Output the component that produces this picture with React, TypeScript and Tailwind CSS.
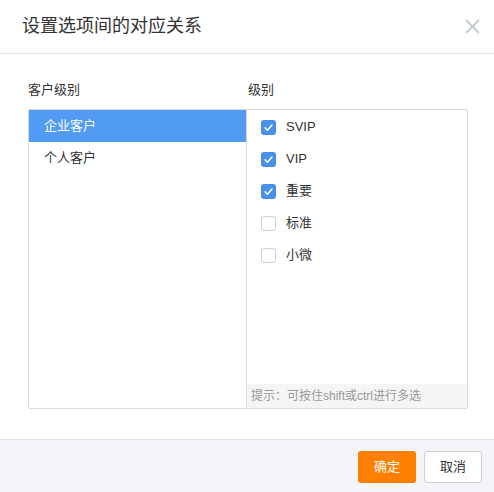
import { useState } from 'react';

const customerLevels = ['企业客户', '个人客户'];
const levels = ['SVIP', 'VIP', '重要', '标准', '小微'];

const CheckIcon = () => (
  <svg viewBox="0 0 16 16" className="w-[11px] h-[11px]" fill="none">
    <path d="M3 8.5 L6.5 12 L13 4.5" stroke="#fff" strokeWidth="2.2" strokeLinecap="round" strokeLinejoin="round" />
  </svg>
);

const App = () => {
  const [activeCustomer, setActiveCustomer] = useState(0);
  const [checked, setChecked] = useState<string[]>(['SVIP', 'VIP', '重要']);

  const toggle = (name: string) => {
    setChecked((prev) => (prev.includes(name) ? prev.filter((n) => n !== name) : [...prev, name]));
  };

  return (
    <div
      className="w-[494px] h-[492px] bg-white flex flex-col text-[#333]"
      style={{ fontFamily: '"Liberation Sans", "Noto Sans CJK SC", sans-serif' }}
    >
      {/* header */}
      <div className="h-[54px] shrink-0 flex items-center justify-between border-b border-[#e4e4e4] pl-[22px] pr-[14px]">
        <h2 className="text-[18px] text-[#333] leading-none pb-[1px]">设置选项间的对应关系</h2>
        <button className="w-[15px] h-[15px] flex items-center justify-center">
          <svg viewBox="0 0 15 15" className="w-[15px] h-[15px]">
            <path d="M1 1 L14 14 M14 1 L1 14" stroke="#c6ccd6" strokeWidth="1.9" />
          </svg>
        </button>
      </div>

      {/* body */}
      <div className="flex-1 pt-[26px] pl-[28px]">
        <div className="flex w-[440px] h-[20px] items-center text-[13px]">
          <div className="w-[220px]">客户级别</div>
          <div>级别</div>
        </div>
        <div className="mt-[9px] w-[440px] h-[300px] border border-[#d9d9d9] rounded-[2px] flex">
          <div className="w-[218px] border-r border-[#d9d9d9]">
            {customerLevels.map((name, i) => (
              <div
                key={name}
                onClick={() => setActiveCustomer(i)}
                className={`h-[32px] flex items-center pl-[15px] text-[13px] cursor-pointer ${
                  activeCustomer === i ? 'bg-[#519cf2] text-white' : 'text-[#333]'
                }`}
              >
                {name}
              </div>
            ))}
          </div>
          <div className="flex-1 flex flex-col">
            <div className="flex-1 pt-[1px]">
              {levels.map((name) => {
                const on = checked.includes(name);
                return (
                  <label key={name} className="h-[32px] flex items-center pl-[14px] cursor-pointer" onClick={() => toggle(name)}>
                    <span
                      className={`w-[15px] h-[15px] rounded-[3px] flex items-center justify-center ${
                        on ? 'bg-[#4a8fe8]' : 'bg-white border border-[#d0d0d0]'
                      }`}
                    >
                      {on && <CheckIcon />}
                    </span>
                    <span className="ml-[10px] text-[13px]">{name}</span>
                  </label>
                );
              })}
            </div>
            <div className="h-[24px] bg-[#f5f5f5] flex items-center pl-[4px] text-[12px] text-[#999]">
              提示：可按住shift或ctrl进行多选
            </div>
          </div>
        </div>
      </div>

      {/* footer */}
      <div className="h-[53px] shrink-0 border-t border-[#e2e2e2] bg-[#f4f5f9] flex items-center justify-end gap-[8px] pr-[12px] pt-[1px]">
        <button className="w-[58px] h-[32px] rounded-[3px] bg-[#ff8000] text-white text-[13px]">确定</button>
        <button className="w-[58px] h-[32px] rounded-[3px] bg-white border border-[#d0d0d0] text-[#333] text-[13px]">取消</button>
      </div>
    </div>
  );
};

export default App;
